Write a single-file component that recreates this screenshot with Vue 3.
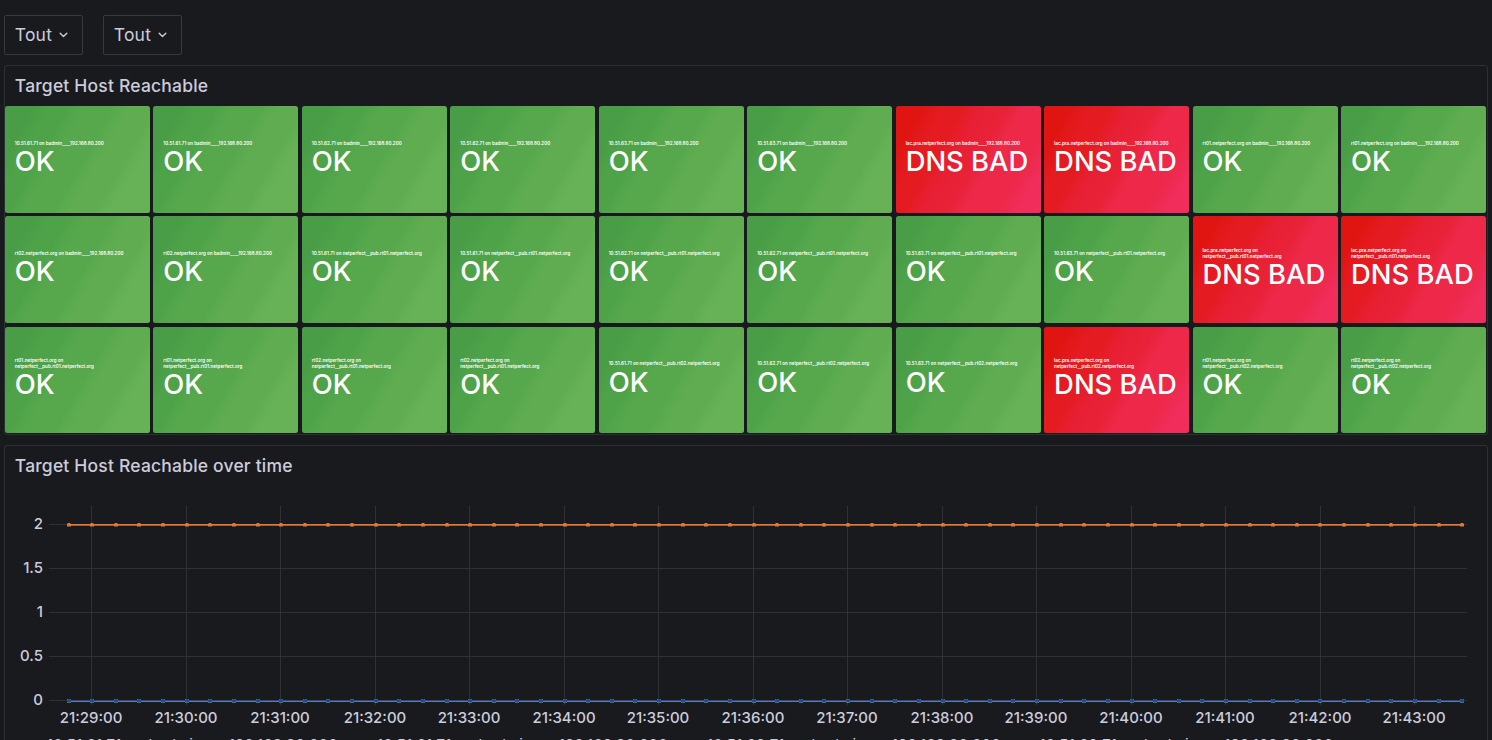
<script setup>
const adm = ' on badmin____192.168.80.200'
const rt1 = ' on netperfect__pub.rt01.netperfect.org'
const rt2 = ' on netperfect__pub.rt02.netperfect.org'
const names = [
  '10.51.61.71' + adm, '10.51.61.71' + adm, '10.51.62.71' + adm, '10.51.62.71' + adm,
  '10.51.63.71' + adm, '10.51.63.71' + adm, 'lac.pra.netperfect.org' + adm, 'lac.pra.netperfect.org' + adm,
  'rt01.netperfect.org' + adm, 'rt01.netperfect.org' + adm,
  'rt02.netperfect.org' + adm, 'rt02.netperfect.org' + adm, '10.51.61.71' + rt1, '10.51.61.71' + rt1,
  '10.51.62.71' + rt1, '10.51.62.71' + rt1, '10.51.63.71' + rt1, '10.51.63.71' + rt1,
  'lac.pra.netperfect.org' + rt1, 'lac.pra.netperfect.org' + rt1,
  'rt01.netperfect.org' + rt1, 'rt01.netperfect.org' + rt1, 'rt02.netperfect.org' + rt1, 'rt02.netperfect.org' + rt1,
  '10.51.61.71' + rt2, '10.51.62.71' + rt2, '10.51.63.71' + rt2, 'lac.pra.netperfect.org' + rt2,
  'rt01.netperfect.org' + rt2, 'rt02.netperfect.org' + rt2,
]
const tiles = names.map((name) => {
  const down = name.startsWith('lac')
  const [host, target] = name.split(' on ')
  return { host, target, down, wrap: !host.startsWith('10.') && target.startsWith('net') }
})
const variables = ['Tout', 'Tout']
const ticks = Array.from({ length: 15 }, (_, k) => ({
  x: Math.round(91 + 94.5 * k),
  label: `21:${29 + k}:00`,
}))
const levels = [
  { y: 38, label: '2' }, { y: 82, label: '1.5' }, { y: 126, label: '1' },
  { y: 170, label: '0.5' }, { y: 214, label: '0' },
]
const points = Array.from({ length: 60 }, (_, k) => Math.round(67.6 + 23.62 * k))
const series = [
  { y: 38, color: '#e8762d', under: '#9a6340', edge: '#8a6450' },
  { y: 214, color: '#1250a4', under: '#7d7680', edge: '#8f8378' },
]
const legend = ['10.51.61.71', '10.51.61.71', '10.51.62.71', '10.51.62.71'].map((h) => h + adm)
</script>

<template>
  <div class="page">
    <div class="controls">
      <button v-for="(v, i) in variables" :key="i" class="picker">
        <span>{{ v }}</span>
        <svg width="9" height="6" viewBox="0 0 9 6"><path d="M1.2 1.2 4.5 4.4 7.8 1.2" /></svg>
      </button>
    </div>

    <section class="panel stats">
      <h2>Target Host Reachable</h2>
      <div class="grid">
        <div v-for="(t, i) in tiles" :key="i" class="tile" :class="{ down: t.down }">
          <div class="name">{{ t.host }} on <br v-if="t.wrap" />{{ t.target }}</div>
          <div class="value">{{ t.down ? 'DNS BAD' : 'OK' }}</div>
        </div>
      </div>
    </section>

    <section class="panel chart">
      <h2>Target Host Reachable over time</h2>
      <svg class="plot" width="1482" height="245" viewBox="5 0 1482 245" shape-rendering="crispEdges">
        <g class="lines">
          <rect v-for="l in levels" :key="l.y" x="49" :y="l.y" width="1418" height="1" />
          <rect v-for="t in ticks" :key="t.x" :x="t.x" y="20" width="1" height="199" />
        </g>
        <g v-for="s in series" :key="s.y">
          <rect x="68" :y="s.y" width="1394" height="1" :fill="s.color" />
          <rect x="68" :y="s.y + 1" width="1394" height="1" :fill="s.under" />
          <g v-for="p in points" :key="p">
            <rect :x="p - 1" :y="s.y - 1" width="4" height="4" :fill="s.edge" opacity="0.7" />
            <rect :x="p - 1" :y="s.y" width="4" height="2" :fill="s.color" />
            <rect :x="p" :y="s.y - 1" width="2" height="3" :fill="s.color" />
          </g>
        </g>
        <g class="labels">
          <text v-for="l in levels" :key="l.y" x="43" :y="l.y + 5" text-anchor="end">{{ l.label }}</text>
          <text v-for="t in ticks" :key="t.x" :x="t.x" y="237" text-anchor="middle">{{ t.label }}</text>
        </g>
      </svg>
      <div class="legend">
        <div v-for="(l, i) in legend" :key="i" class="entry"><i></i><span>{{ l }}</span></div>
      </div>
    </section>
  </div>
</template>

<style>
html,
body {
  background: #181a1e;
  overflow: hidden;
}
</style>

<style scoped>
.page {
  width: 1492px;
  height: 740px;
  box-sizing: border-box;
  padding: 15px 4px 0;
  overflow: hidden;
  background: #181a1e;
  color: #ccccdc;
  font-family: Inter, 'Liberation Sans', sans-serif;
}
.controls {
  display: flex;
  gap: 20px;
  height: 40px;
  margin-bottom: 10px;
}
.picker {
  display: flex;
  align-items: center;
  gap: 7.2px;
  width: 79px;
  height: 40px;
  padding: 0 0 0 9.8px;
  border: 1px solid #38393e;
  border-radius: 2px;
  background: transparent;
  color: inherit;
  font: 400 17.5px/22px Inter, sans-serif;
  letter-spacing: 0.01071em;
}
.picker path {
  fill: none;
  stroke: #ccccdc;
  stroke-width: 1.4;
  stroke-linecap: round;
  stroke-linejoin: round;
}
.panel {
  box-sizing: border-box;
  width: 1484px;
  border: 1px solid #2e2f34;
  border-radius: 3px;
}
h2 {
  margin: 0;
  padding-left: 9.8px;
  height: 40px;
  font-size: 17.5px;
  font-weight: 500;
  line-height: 40px;
  letter-spacing: 0.01071em;
}
.stats {
  height: 370px;
  margin-bottom: 10px;
}
.grid {
  display: grid;
  width: 1481px;
  height: 327.3px;
  grid-template-columns: repeat(10, 1fr);
  grid-template-rows: repeat(3, 1fr);
  gap: 3.75px;
}
.tile {
  min-width: 0;
  box-sizing: border-box;
  display: flex;
  flex-direction: column;
  justify-content: center;
  padding: 0 0 1px 9.8px;
  border-radius: 2.5px;
  background: linear-gradient(
    120deg,
    #489d46 14%, #4ea349 22%,
    #4ea349 31%, #57a84d 39%,
    #57a84d 53%, #60ad51 61%,
    #60ad51 73%, #67b256 81%
  );
  color: #fff;
  font-weight: 500;
  white-space: nowrap;
}
.tile.down {
  background: linear-gradient(
    120deg,
    #e01512 13%, #e51b22 24%,
    #e51b22 33%, #e82036 43%,
    #e92238 54%, #ed2849 62%,
    #ed2849 78%, #f02d5b 88%
  );
}
.name {
  font-size: 4.5px;
  font-weight: 600;
  line-height: 5.5px;
  letter-spacing: 0.005em;
}
.value {
  font-size: 27.4px;
  line-height: 31px;
}
.chart {
  height: 340px;
}
.plot {
  display: block;
}
.lines {
  fill: #303136;
}
.labels {
  fill: #ccccdc;
  font-size: 15px;
  font-weight: 500;
}
.legend {
  display: flex;
  padding: 4px 0 0 18px;
}
.entry {
  display: flex;
  align-items: center;
  width: 330px;
  height: 19px;
  font-size: 15px;
  letter-spacing: 0.012em;
  white-space: nowrap;
}
.entry:nth-child(3) {
  width: 332.5px;
}
.entry i {
  width: 17px;
  height: 5px;
  margin-right: 7px;
  border-radius: 2px;
  background: #73bf69;
}
</style>
